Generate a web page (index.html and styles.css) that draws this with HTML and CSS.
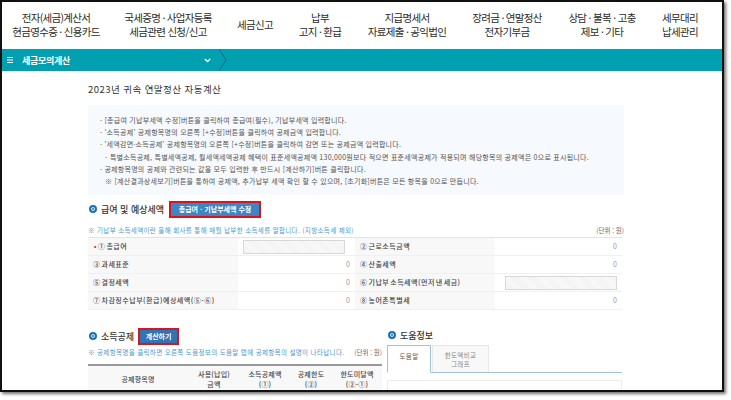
FILE: index.html
```html
<!DOCTYPE html>
<html lang="ko">
<head>
<meta charset="utf-8">
<title>세금모의계산</title>
<link rel="stylesheet" href="styles.css">
</head>
<body>
<div class="frame">
  <nav class="gnb">
    <a>전자(세금)계산서<br>현금영수증 · 신용카드</a>
    <a>국세증명 · 사업자등록<br>세금관련 신청/신고</a>
    <a>세금신고</a>
    <a>납부<br>고지 · 환급</a>
    <a>지급명세서<br>자료제출 · 공익법인</a>
    <a>장려금 · 연말정산<br>전자기부금</a>
    <a>상담 · 불복 · 고충<br>제보 · 기타</a>
    <a>세무대리<br>납세관리</a>
  </nav>
  <div class="crumb">
    <div class="crumb-cell">
      <svg class="menu-icon" width="6" height="6" viewBox="0 0 6 6"><path d="M0 .5h6M0 3h6M0 5.500h6" stroke="#fff" fill="none"/></svg>
      <span class="crumb-label">세금모의계산</span>
      <svg class="crumb-down" width="7" height="5" viewBox="0 0 7 5"><path d="M.8 1l2.700 2.500L6.200 1" stroke="#fff" stroke-width="1.400" fill="none"/></svg>
    </div>
    <svg class="crumb-sep" width="8" height="22" viewBox="0 0 8 22"><path d="M0 0l7 11L0 22" stroke="#0b6f7d" fill="none"/></svg>
  </div>
  <main class="content">
    <h1 class="title">2023년 귀속 연말정산 자동계산</h1>
    <ul class="guide">
      <li>· [총급여 기납부세액 수정]버튼을 클릭하여 총급여(필수), 기납부세액 입력합니다.</li>
      <li>· '소득공제' 공제항목명의 오른쪽 [+수정]버튼을 클릭하여 공제금액 입력합니다.</li>
      <li>· '세액감면·소득공제' 공제항목명의 오른쪽 [+수정]버튼을 클릭하여 감면 또는 공제금액 입력합니다.</li>
      <li class="sub">- 특별소득공제, 특별세액공제, 월세액세액공제 혜택이 표준세액공제액 130,000원보다 적으면 표준세액공제가 적용되며 해당항목의 공제액은 0으로 표시됩니다.</li>
      <li>· 공제항목명의 공제와 관련되는 값을 모두 입력한 후 반드시 [계산하기]버튼 클릭합니다.</li>
      <li class="sub">※ [계산결과상세보기]버튼을 통하여 공제액, 추가납부 세액 확인 할 수 있으며, [초기화]버튼은 모든 항목을 0으로 만듭니다.</li>
    </ul>

    <div class="sec-head sec-one">
      <span class="dot"></span><h2>급여 및 예상세액</h2>
      <button class="btn btn-wide">총급여 · 기납부세액 수정</button>
    </div>
    <div class="note-row">
      <p class="note">※ 기납부 소득세액이란 올해 회사를 통해 매월 납부한 소득세를 말합니다. (지방소득세 제외)</p>
      <span class="unit">(단위 : 원)</span>
    </div>
    <table class="summary">
      <colgroup><col class="c1"><col class="c2"><col class="c3"><col></colgroup>
      <tr>
        <th><i class="req">•</i> ① 총급여</th><td><span class="hatch"></span></td>
        <th>② 근로소득금액</th><td>0</td>
      </tr>
      <tr>
        <th>③ 과세표준</th><td>0</td>
        <th>④ 산출세액</th><td>0</td>
      </tr>
      <tr>
        <th>⑤ 결정세액</th><td>0</td>
        <th>⑥ 기납부 소득세액(먼저 낸 세금)</th><td><span class="hatch hatch-r"></span></td>
      </tr>
      <tr>
        <th>⑦ 차감징수납부(환급)예상세액(⑤-⑥)</th><td>0</td>
        <th>⑧ 농어촌특별세</th><td>0</td>
      </tr>
    </table>

    <div class="split">
      <section class="left">
        <div class="sec-head sec-two">
          <span class="dot"></span><h2>소득공제</h2>
          <button class="btn btn-calc">계산하기</button>
        </div>
        <div class="note-row note-two">
          <p class="note">※ 공제항목명을 클릭하면 오른쪽 도움정보의 도움말 탭에 공제항목의 설명이 나타납니다.</p>
          <span class="unit">(단위 : 원)</span>
        </div>
        <table class="deduct">
          <colgroup><col class="d1"><col class="d2"><col class="d3"><col class="d4"><col></colgroup>
          <tr>
            <th>공제항목명</th>
            <th>사용(납입)<br>금액</th>
            <th>소득공제액<br>(①)</th>
            <th>공제한도<br>(②)</th>
            <th>한도미달액<br>(②-①)</th>
          </tr>
        </table>
      </section>
      <section class="right">
        <div class="sec-head sec-help">
          <span class="dot"></span><h2>도움정보</h2>
        </div>
        <div class="tabs">
          <span class="tab tab-on">도움말</span>
          <span class="tab">한도액비교<br>그래프</span>
        </div>
        <div class="help-box"></div>
      </section>
    </div>
  </main>
</div>
</body>
</html>
```
FILE: styles.css
```css
* { box-sizing: border-box; }
html, body { margin: 0; height: 400px; overflow: hidden; background: #fff; }
body { font-family: "Noto Sans CJK KR", "Noto Sans", sans-serif; color: #333; }

.frame {
  width: 724px;
  height: 392px;
  border: 2px solid #111;
  background: #fff;
  overflow: hidden;
  box-shadow: 2px 2px 3px rgba(0, 0, 0, .55);
}

.gnb {
  display: grid;
  grid-template-columns: 108px 116px 58px 72px 102px 98px 92px 64px;
  height: 47px;
  padding-bottom: 2px;
  align-items: center;
  text-align: center;
  font-size: 10.500px;
  line-height: 14px;
  letter-spacing: -.7px;
  color: #2b2b2b;
}

.crumb { height: 22px; background: #00a0b0; display: flex; align-items: stretch; }
.crumb-cell { width: 217px; display: flex; align-items: center; padding-left: 5px; color: #fff; }
.menu-icon { margin-right: 9px; }
.crumb-label { font-size: 9px; font-weight: 700; letter-spacing: -.3px; flex: 1; }
.crumb-down { margin-right: 8px; }
.crumb-sep { display: block; }

.content { padding: 12px 0 0 86px; width: 622px; }
.title { margin: 0; font-size: 9.500px; line-height: 13px; font-weight: 400; letter-spacing: .45px; color: #333; }

.guide {
  list-style: none;
  margin: 9px 0 0;
  padding: 9px 0 6px 12px;
  height: 90px;
  background: #f6f9fd;
  font-size: 7px;
  line-height: 12.200px;
  letter-spacing: .25px;
  color: #555;
}
.guide .sub { padding-left: 5px; white-space: nowrap; }

.sec-head { display: flex; align-items: center; }
.sec-head h2 { margin: 0; font-size: 9px; font-weight: 500; color: #333; letter-spacing: 0; white-space: nowrap; }
.dot { width: 8px; height: 8px; margin: 0 4px 0 0; border-radius: 50%; background: #1a73b8; border: 2px solid #1a73b8; box-shadow: inset 0 0 0 1px #fff; flex: none; }
.sec-one { margin-top: 5px; height: 18px; padding-left: 1px; }
.btn {
  border: 2px solid #d9141c;
  background: #3d86c6;
  color: #fff;
  font: 700 7px/1 "Noto Sans CJK KR", sans-serif;
  padding: 0;
  height: 17px;
}
.btn-wide { width: 92px; margin-left: 5px; }
.btn-calc { width: 41px; margin-left: 4px; background: #2f74b5; }

.note-row { display: flex; justify-content: space-between; align-items: center; height: 15px; margin-top: 4px; }
.note { margin: 0; font-size: 6.500px; color: #4a9ad0; letter-spacing: .35px; white-space: nowrap; }
.unit { font-size: 6.500px; color: #666; white-space: nowrap; }

.summary { width: 534px; table-layout: fixed; border-collapse: collapse; border-top: 1px solid #e4e4e4; border-bottom: 1px solid #dcdcdc; }
.c1 { width: 150px; }
.c2 { width: 117px; }
.c3 { width: 140px; }
.summary tr { height: 18px; border-bottom: 1px solid #f0f0f0; }
.summary th, .summary td { padding: 0 5px; font-size: 7px; line-height: 1; color: #444; white-space: nowrap; overflow: hidden; }
.summary th { background: #f8f8f8; font-weight: 500; text-align: left; letter-spacing: .5px; word-spacing: -1.500px; }
.summary td { text-align: right; color: #999; }
.req { color: #e0202a; font-style: normal; margin-left: 1px; }

.hatch {
  display: block;
  width: 102px;
  height: 14px;
  margin-left: 0;
  border: 1px solid #d8d8d8;
  background: repeating-linear-gradient(45deg, #f2f2f2 0 1px, #fafafa 1px 2px);
}
.hatch-r { width: 112px; margin-left: auto; }

.split { display: grid; grid-template-columns: 294px 235px; column-gap: 5px; margin-top: 17px; }
.sec-two { height: 18px; padding-left: 1px; }
.note-two { margin-top: -1px; height: 15px; }
.deduct { width: 294px; margin-top: 5px; table-layout: fixed; border-collapse: collapse; border-top: 2px solid #999; }
.d1 { width: 100px; }
.d2 { width: 52px; }
.d3 { width: 50px; }
.d4 { width: 42px; }
.deduct th { height: 30px; padding: 0 0 4px; background: #f8f8f8; font-size: 7px; line-height: 10px; font-weight: 500; color: #444; text-align: center; letter-spacing: .2px; }

.sec-help { height: 16px; margin-top: 0; padding-left: 1px; }
.tabs { display: flex; height: 28px; margin-top: 2px; border-bottom: 1px solid #9cc3e0; gap: 1px; }
.tab { font-size: 6.500px; line-height: 9px; text-align: center; letter-spacing: .3px; color: #888; }
.tab-on { width: 44px; height: 28px; padding-top: 6px; background: #fff; border: 1px solid #9cc3e0; border-bottom-color: #fff; color: #555; }
.tab:not(.tab-on) { width: 57px; padding-top: 5px; background: #f8f8f8; border: 1px solid #e8e8e8; border-bottom: 0; }
.help-box { height: 20px; margin-top: 7px; border: 1px solid #ececec; }
```
